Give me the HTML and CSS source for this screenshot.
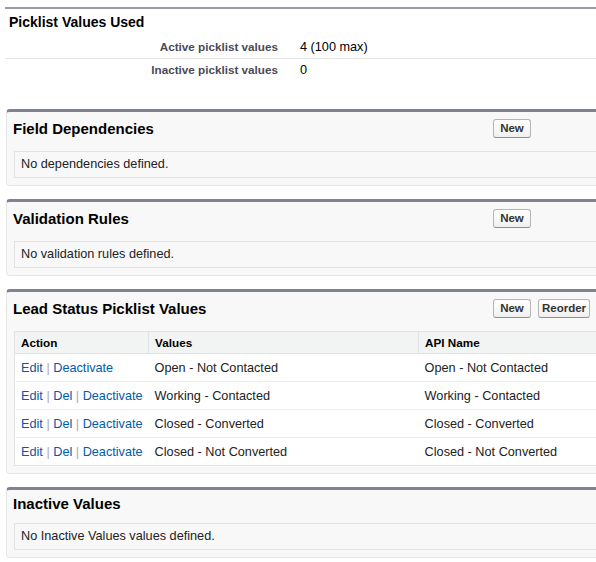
FILE: index.html
```html
<!DOCTYPE html>
<html lang="en">
<head>
  <meta charset="UTF-8" />
  <title>Lead Status Picklist</title>
  <link rel="stylesheet" href="styles.css">
</head>
<body>
  <div class="page">

    <div class="detail-section">
      <h2 class="detail-title">Picklist Values Used</h2>
      <div class="detail-row">
        <div class="detail-label">Active picklist values</div>
        <div class="detail-value">4 (100 max)</div>
      </div>
      <div class="detail-row">
        <div class="detail-label">Inactive picklist values</div>
        <div class="detail-value">0</div>
      </div>
    </div>

    <div class="panel">
      <div class="panel-header">
        <h3 class="panel-title">Field Dependencies</h3>
        <div class="panel-buttons">
          <button class="btn">New</button>
        </div>
      </div>
      <div class="empty-box">No dependencies defined.</div>
    </div>

    <div class="panel">
      <div class="panel-header">
        <h3 class="panel-title">Validation Rules</h3>
        <div class="panel-buttons">
          <button class="btn">New</button>
        </div>
      </div>
      <div class="empty-box">No validation rules defined.</div>
    </div>

    <div class="panel">
      <div class="panel-header">
        <h3 class="panel-title">Lead Status Picklist Values</h3>
        <div class="panel-buttons">
          <button class="btn">New</button>
          <button class="btn">Reorder</button>
        </div>
      </div>
      <table class="list">
        <thead>
          <tr>
            <th class="col-action">Action</th>
            <th class="col-value">Values</th>
            <th>API Name</th>
          </tr>
        </thead>
        <tbody>
          <tr>
            <td><a href="#">Edit</a> <span class="sep">|</span> <a href="#">Deactivate</a></td>
            <td>Open - Not Contacted</td>
            <td>Open - Not Contacted</td>
          </tr>
          <tr>
            <td><a href="#">Edit</a> <span class="sep">|</span> <a href="#">Del</a> <span class="sep">|</span> <a href="#">Deactivate</a></td>
            <td>Working - Contacted</td>
            <td>Working - Contacted</td>
          </tr>
          <tr>
            <td><a href="#">Edit</a> <span class="sep">|</span> <a href="#">Del</a> <span class="sep">|</span> <a href="#">Deactivate</a></td>
            <td>Closed - Converted</td>
            <td>Closed - Converted</td>
          </tr>
          <tr>
            <td><a href="#">Edit</a> <span class="sep">|</span> <a href="#">Del</a> <span class="sep">|</span> <a href="#">Deactivate</a></td>
            <td>Closed - Not Converted</td>
            <td>Closed - Not Converted</td>
          </tr>
        </tbody>
      </table>
    </div>

    <div class="panel">
      <div class="panel-header short">
        <h3 class="panel-title">Inactive Values</h3>
      </div>
      <div class="empty-box">No Inactive Values values defined.</div>
    </div>

  </div>
</body>
</html>
```

FILE: styles.css
```css
html, body {
  margin: 0;
  padding: 0;
  background: #fff;
  overflow: hidden;
}

body {
  font-family: "Liberation Sans", Arial, sans-serif;
  font-size: 12.7px;
  color: #222;
}

.page {
  width: 640px;
  padding: 7px 0 0 5px;
}

/* top detail block */
.detail-section {
  border-top: 2px solid #9a9ba8;
  margin-bottom: 29px;
}

.detail-title {
  margin: 0;
  padding: 5px 4px 5px;
  font-size: 14px;
  line-height: 16px;
  font-weight: bold;
  color: #000;
}

.detail-row {
  display: flex;
  height: 23px;
  align-items: center;
}

.detail-row + .detail-row {
  border-top: 1px solid #e6e6e6;
  height: 21px;
}

.detail-label {
  width: 273px;
  text-align: right;
  font-size: 11.7px;
  font-weight: bold;
  color: #4a4a56;
}

.detail-value {
  padding-left: 22px;
  color: #000;
}

/* panels */
.panel {
  margin: 0 0 13px 1px;
  background: #f8f8f8;
  border: 1px solid #e6e6e6;
  border-top: 3px solid #7f8391;
  border-radius: 4px;
  padding: 0 0 7px 7px;
}

.panel-header {
  display: flex;
  align-items: center;
  height: 32px;
  margin: 0 0 7px -1px;
}

.panel-header.short {
  height: 26px;
}

.panel-title {
  width: 480px;
  margin: 0;
  font-size: 15px;
  font-weight: bold;
  color: #000;
}

.panel-buttons {
  display: flex;
  gap: 7px;
}

.btn {
  font-family: "Liberation Sans", Arial, sans-serif;
  font-size: 11.5px;
  font-weight: bold;
  color: #333;
  min-width: 38px;
  height: 19px;
  padding: 0 3px;
  background: linear-gradient(#ffffff, #f0f0f0);
  border: 1px solid #b5b5b5;
  border-bottom-color: #8f8f8f;
  border-radius: 3px;
}

.empty-box {
  border: 1px solid #e0e3e5;
  padding: 6px 6px;
  line-height: 13px;
  color: #222;
}

/* list table */
.list {
  width: 100%;
  border-collapse: collapse;
  border: 1px solid #e0e3e5;
  background: #fff;
}

.list th {
  text-align: left;
  font-size: 11.7px;
  font-weight: bold;
  color: #000;
  background: #f2f3f3;
  height: 21px;
  padding: 0 6px;
  border-right: 1px solid #e0e3e5;
  border-bottom: 1px solid #e0e3e5;
}

.list .col-action {
  width: 121px;
}

.list .col-value {
  width: 257px;
}

.list td {
  height: 27px;
  padding: 0 6px;
  color: #222;
  border-top: 1px solid #ededed;
  white-space: nowrap;
}

.list a {
  color: #015ba7;
  text-decoration: none;
}

.list .sep {
  color: #aaa;
}
```
